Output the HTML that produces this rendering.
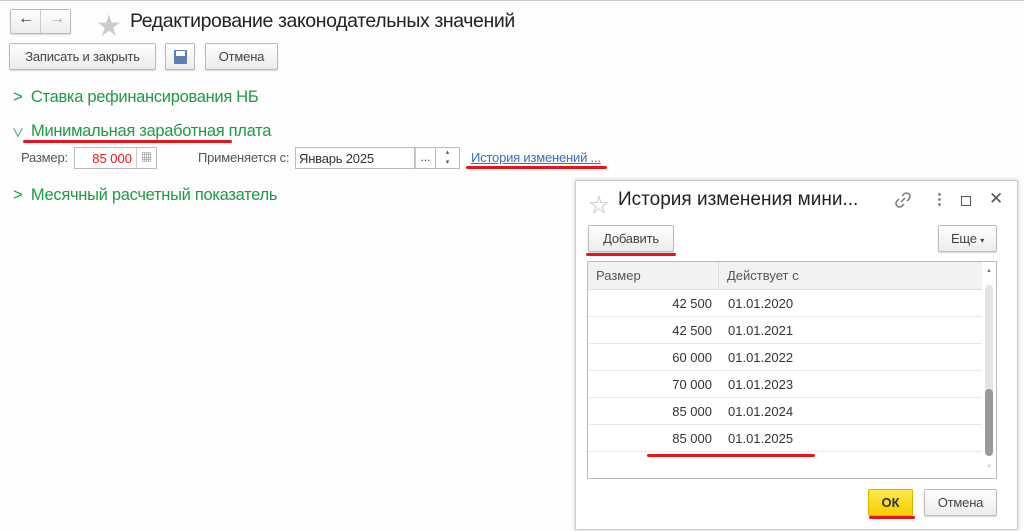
<!DOCTYPE html>
<html><head><meta charset="utf-8"><style>
*{box-sizing:border-box;margin:0;padding:0}
body{width:1024px;height:531px;background:#fdfdfd;font-family:"Liberation Sans","Noto Sans CJK SC",sans-serif;position:relative;overflow:hidden;color:#333}
.a{position:absolute;white-space:nowrap}
.btn{position:absolute;border:1px solid #bbb;border-radius:2px;background:linear-gradient(#fff,#ececec);box-shadow:0 1px 1px rgba(0,0,0,.15);font-size:13px;letter-spacing:-0.2px;color:#444;text-align:center;white-space:nowrap}
.g{color:#1e9a46;font-size:16.5px;letter-spacing:-0.3px}
.sm{font-size:13px;letter-spacing:-0.2px}
.red{position:absolute;height:3px;background:#e8141c;border-radius:2px}
.row{position:absolute;left:588px;width:394px;height:27px;border-bottom:1px solid #e8e8e8;font-size:13px;color:#333}
.row .s{position:absolute;right:270px;top:6px}
.row .d{position:absolute;left:140px;top:6px}
</style></head><body>
<div class="a" style="left:0;top:0;width:1024px;height:1px;background:#ccc"></div>
<div class="btn" style="left:10px;top:9px;width:61px;height:25px;"></div>
<div class="a" style="left:40px;top:10px;width:1px;height:23px;background:#ccc"></div>
<div class="a" style="left:18px;top:10px;font-size:16px;color:#333">&#8592;</div>
<div class="a" style="left:49px;top:10px;font-size:16px;color:#aaa">&#8594;</div>
<div class="a" style="left:97px;top:6px;font-size:24px;color:#ccc">&#9733;</div>
<div class="a" style="left:130px;top:10px;font-size:19.5px;color:#222;letter-spacing:-0.4px">Редактирование законодательных значений</div>
<div class="btn" style="left:9px;top:43px;width:147px;height:27px;line-height:25px">Записать и закрыть</div>
<div class="btn" style="left:165px;top:43px;width:30px;height:27px"><div class="a" style="left:8px;top:6px;width:13px;height:14px;background:#5a7eb8;border-radius:1px"><div class="a" style="left:2px;top:1px;width:9px;height:5px;background:#fff"></div></div></div>
<div class="btn" style="left:205px;top:43px;width:73px;height:27px;line-height:25px">Отмена</div>
<div class="a g" style="left:13px;top:88px">&gt;&nbsp; Ставка рефинансирования НБ</div>
<div class="a" style="left:12px;top:124px;font-size:12px;color:#1e9a46">&#8744;</div>
<div class="a g" style="left:31px;top:122px">Минимальная заработная плата</div>
<div class="red" style="left:23px;top:140px;width:209px"></div>
<div class="a sm" style="left:21px;top:150px;color:#555">Размер:</div>
<div class="a" style="left:74px;top:147px;width:83px;height:22px;border:1px solid #bbb;background:#fff"><span class="a" style="right:24px;top:3px;color:#e8141c;font-size:13px">85 000</span><span class="a" style="right:0;top:0;width:20px;height:20px;border-left:1px solid #ccc;font-size:11px;color:#666;text-align:center;line-height:20px">&#9638;</span></div>
<div class="a sm" style="left:198px;top:150px;color:#555">Применяется с:</div>
<div class="a" style="left:295px;top:147px;width:120px;height:22px;border:1px solid #bbb;background:#fff"><span class="a sm" style="left:3px;top:3px;color:#333">Январь 2025</span></div>
<div class="a" style="left:435px;top:147px;width:25px;height:22px;border:1px solid #bbb;background:#fff;font-size:7px;text-align:center;line-height:10px;color:#555">▴<br>▾</div>
<div class="a" style="left:415px;top:147px;width:21px;height:22px;border:1px solid #bbb;border-left:1px solid #ccc;background:#fff;font-size:12px;text-align:center;line-height:18px">...</div>
<div class="a sm" style="left:471px;top:150px;color:#3a6cc8;text-decoration:underline">История изменений ...</div>
<div class="red" style="left:466px;top:166px;width:141px"></div>
<div class="a g" style="left:13px;top:186px">&gt;&nbsp; Месячный расчетный показатель</div>

<div class="a" style="left:575px;top:180px;width:443px;height:350px;border:1px solid #ccc;background:#fff;box-shadow:0 0 4px rgba(0,0,0,.2)"></div>
<div class="a" style="left:589px;top:189px;font-size:20px;color:#bbb">&#9734;</div>
<div class="a" style="left:618px;top:189px;font-size:19px;color:#222">История изменения мини...</div>
<svg class="a" style="left:894px;top:191px" width="18" height="18" viewBox="0 0 18 18" fill="none" stroke="#777" stroke-width="1.5"><path d="M8 5l2-2a3 3 0 0 1 5 5l-2 2M10 13l-2 2a3 3 0 0 1-5-5l2-2M7 11l4-4"/></svg>
<div class="a" style="left:932px;top:190px;font-size:15px;color:#666;font-weight:bold">&#8942;</div>
<div class="a" style="left:961px;top:196px;width:10px;height:10px;border:1.5px solid #555"></div>
<div class="a" style="left:989px;top:189px;font-size:17px;color:#555">&#10005;</div>
<div class="btn" style="left:588px;top:225px;width:86px;height:27px;line-height:25px">Добавить</div>
<div class="red" style="left:586px;top:253px;width:90px"></div>
<div class="btn" style="left:938px;top:225px;width:59px;height:27px;line-height:25px">Еще <span style="font-size:8px">▾</span></div>
<div class="a" style="left:587px;top:261px;width:410px;height:218px;border:1px solid #bbb"></div>
<div class="a" style="left:588px;top:262px;width:394px;height:28px;background:#f2f2f2;border-bottom:1px solid #ddd"></div>
<div class="a" style="left:718px;top:262px;width:1px;height:28px;background:#ddd"></div>
<div class="a" style="left:596px;top:268px;font-size:13px;color:#555">Размер</div>
<div class="a" style="left:727px;top:268px;font-size:13px;color:#555">Действует с</div>
<div class="row" style="top:290px"><span class="s">42 500</span><span class="d">01.01.2020</span></div>
<div class="row" style="top:317px"><span class="s">42 500</span><span class="d">01.01.2021</span></div>
<div class="row" style="top:344px"><span class="s">60 000</span><span class="d">01.01.2022</span></div>
<div class="row" style="top:371px"><span class="s">70 000</span><span class="d">01.01.2023</span></div>
<div class="row" style="top:398px"><span class="s">85 000</span><span class="d">01.01.2024</span></div>
<div class="row" style="top:425px"><span class="s">85 000</span><span class="d">01.01.2025</span></div>
<div class="red" style="left:647px;top:454px;width:168px"></div>
<div class="a" style="left:985px;top:285px;width:8px;height:171px;background:#e4e4e4;border-radius:4px"></div>
<div class="a" style="left:985px;top:389px;width:8px;height:67px;background:#999;border-radius:4px"></div>
<div class="a" style="left:986px;top:268px;font-size:6px;color:#777">▲</div>
<div class="a" style="left:986px;top:464px;font-size:6px;color:#ccc">▼</div>
<div class="a" style="left:868px;top:489px;width:45px;height:27px;border:1px solid #d4b800;border-radius:2px;background:linear-gradient(#ffe84a,#f4d000);font-size:13px;font-weight:bold;text-align:center;line-height:25px;color:#333">ОК</div>
<div class="red" style="left:869px;top:516px;width:46px"></div>
<div class="btn" style="left:924px;top:489px;width:73px;height:27px;line-height:25px">Отмена</div>
</body></html>
